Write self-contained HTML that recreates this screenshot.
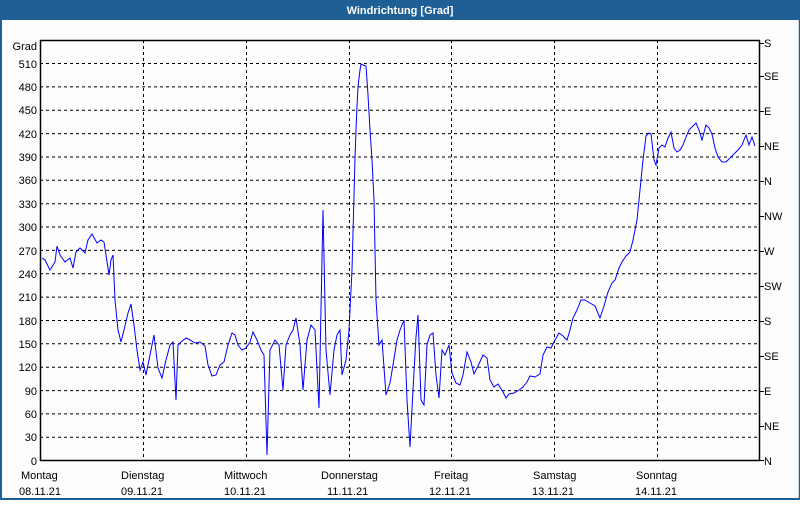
<!DOCTYPE html>
<html><head><meta charset="utf-8"><style>
body{margin:0;width:800px;height:500px;overflow:hidden;background:#fff;font-family:"Liberation Sans",sans-serif}
</style></head><body>
<svg width="800" height="500" xmlns="http://www.w3.org/2000/svg" font-family="Liberation Sans, sans-serif" font-size="11">
<rect x="0" y="0" width="800" height="500" fill="#fdfdfd"/>
<rect x="0" y="0" width="800" height="20" fill="#1e5f95"/>
<rect x="0.5" y="0.5" width="799" height="498.5" fill="none" stroke="#1e5f95" stroke-width="1.5"/>
<rect x="0" y="498" width="800" height="2" fill="#1e5f95"/>
<rect x="0" y="0" width="2" height="500" fill="#1e5f95"/>
<text x="400" y="14" fill="#fff" font-weight="bold" text-anchor="middle">Windrichtung [Grad]</text>
<g stroke="#000" stroke-dasharray="3,3" stroke-width="1">
<line x1="40" x2="760" y1="63.5" y2="63.5"/><line x1="40" x2="760" y1="86.9" y2="86.9"/><line x1="40" x2="760" y1="110.2" y2="110.2"/><line x1="40" x2="760" y1="133.6" y2="133.6"/><line x1="40" x2="760" y1="157" y2="157"/><line x1="40" x2="760" y1="180.3" y2="180.3"/><line x1="40" x2="760" y1="203.7" y2="203.7"/><line x1="40" x2="760" y1="227" y2="227"/><line x1="40" x2="760" y1="250.4" y2="250.4"/><line x1="40" x2="760" y1="273.8" y2="273.8"/><line x1="40" x2="760" y1="297.1" y2="297.1"/><line x1="40" x2="760" y1="320.5" y2="320.5"/><line x1="40" x2="760" y1="343.8" y2="343.8"/><line x1="40" x2="760" y1="367.2" y2="367.2"/><line x1="40" x2="760" y1="390.6" y2="390.6"/><line x1="40" x2="760" y1="413.9" y2="413.9"/><line x1="40" x2="760" y1="437.3" y2="437.3"/>
<line x1="143.5" x2="143.5" y1="40" y2="460"/><line x1="246.5" x2="246.5" y1="40" y2="460"/><line x1="349.5" x2="349.5" y1="40" y2="460"/><line x1="451.5" x2="451.5" y1="40" y2="460"/><line x1="554.5" x2="554.5" y1="40" y2="460"/><line x1="657.5" x2="657.5" y1="40" y2="460"/>
</g>
<rect x="40.5" y="40.5" width="719" height="420" fill="none" stroke="#000" stroke-width="1.5"/>
<g stroke="#000"><line x1="760" x2="764" y1="43.5" y2="43.5"/><line x1="760" x2="764" y1="76.5" y2="76.5"/><line x1="760" x2="764" y1="111.5" y2="111.5"/><line x1="760" x2="764" y1="146.5" y2="146.5"/><line x1="760" x2="764" y1="181.5" y2="181.5"/><line x1="760" x2="764" y1="216.5" y2="216.5"/><line x1="760" x2="764" y1="251.5" y2="251.5"/><line x1="760" x2="764" y1="286.5" y2="286.5"/><line x1="760" x2="764" y1="321.5" y2="321.5"/><line x1="760" x2="764" y1="356.5" y2="356.5"/><line x1="760" x2="764" y1="391.5" y2="391.5"/><line x1="760" x2="764" y1="426.5" y2="426.5"/><line x1="760" x2="764" y1="460.5" y2="460.5"/></g>
<g text-anchor="end" fill="#000">
<text x="37" y="50">Grad</text>
<text x="37" y="68">510</text><text x="37" y="91">480</text><text x="37" y="114">450</text><text x="37" y="138">420</text><text x="37" y="161">390</text><text x="37" y="184">360</text><text x="37" y="208">330</text><text x="37" y="231">300</text><text x="37" y="255">270</text><text x="37" y="278">240</text><text x="37" y="301">210</text><text x="37" y="325">180</text><text x="37" y="348">150</text><text x="37" y="371">120</text><text x="37" y="395">90</text><text x="37" y="418">60</text><text x="37" y="441">30</text><text x="37" y="465">0</text>
</g>
<g fill="#000">
<text x="764" y="47">S</text><text x="764" y="80">SE</text><text x="764" y="115">E</text><text x="764" y="150">NE</text><text x="764" y="185">N</text><text x="764" y="220">NW</text><text x="764" y="255">W</text><text x="764" y="290">SW</text><text x="764" y="325">S</text><text x="764" y="360">SE</text><text x="764" y="395">E</text><text x="764" y="430">NE</text><text x="764" y="465">N</text>
<text x="21" y="479">Montag</text><text x="19" y="495">08.11.21</text>
<text x="121" y="479">Dienstag</text><text x="121" y="495">09.11.21</text>
<text x="224" y="479">Mittwoch</text><text x="224" y="495">10.11.21</text>
<text x="321" y="479">Donnerstag</text><text x="327" y="495">11.11.21</text>
<text x="434" y="479">Freitag</text><text x="429" y="495">12.11.21</text>
<text x="533" y="479">Samstag</text><text x="532" y="495">13.11.21</text>
<text x="636" y="479">Sonntag</text><text x="635" y="495">14.11.21</text>
</g>
<polyline fill="none" stroke="#0000ff" stroke-width="1" points="42,258 45,260 50,270 55,262 57,246 60,255 65,262 70,258 73,268 76,252 80,248 85,253 88,240 92,234 97,243 101,240 104,242 106,255 109,275 111,260 113,255 115,300 118,330 121,342 124,330 128,313 131,304 134,325 137,350 140,370 143,362 146,375 150,355 154,335 158,368 162,378 166,360 170,345 173,342 176,400 178,345 181,342 186,338 190,340 195,343 200,342 205,346 208,365 212,376 216,375 220,365 224,362 228,345 232,333 235,335 238,345 242,350 246,348 250,342 253,332 257,340 261,350 264,355 267,455 270,350 275,340 279,345 283,390 286,345 290,335 293,330 296,318 300,345 303,390 307,340 311,325 315,330 319,408 323,210 326,350 330,395 334,350 337,335 340,330 342,375 346,360 349,330 352,270 355,158 356,130 357,106 358,87 360,70 361,64 363,65 366,66 367,80 368,95 370,130 372,160 374,200 376,300 379,345 382,340 386,395 390,383 393,365 397,340 400,330 404,320 407,400 410,447 413,390 416,337 418,315 421,400 424,405 427,345 430,335 433,333 436,375 439,398 442,350 445,355 449,345 452,373 456,383 460,385 463,375 467,352 471,362 474,374 478,366 483,355 487,358 490,380 494,387 498,384 503,392 506,398 509,394 514,393 519,390 523,387 527,382 530,376 535,377 540,374 543,355 547,347 551,348 555,340 559,333 563,336 567,340 570,330 573,318 577,310 581,300 585,300 590,303 595,306 600,318 604,306 608,292 612,283 615,280 619,268 622,262 626,256 630,252 633,240 637,220 640,190 643,160 646,136 649,133 651,134 654,160 656,165 659,148 662,145 665,147 668,138 671,132 674,148 677,152 680,150 683,145 686,137 689,130 692,127 696,123 699,130 702,140 706,125 709,128 712,134 715,148 718,157 722,162 726,162 730,158 734,154 738,150 742,145 746,135 749,145 752,137 755,146"/>
</svg>
</body></html>
